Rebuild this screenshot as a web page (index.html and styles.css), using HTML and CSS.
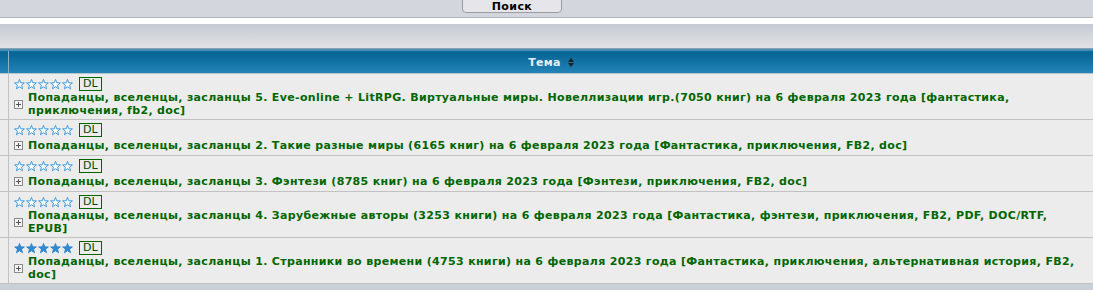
FILE: index.html
```html
<!DOCTYPE html>
<html lang="ru">
<head>
<meta charset="utf-8">
<title>Поиск</title>
<link rel="stylesheet" href="styles.css">
</head>
<body>
<svg class="defs" width="0" height="0" aria-hidden="true">
  <defs>
    <polygon id="star" points="5.5,0.4 6.75,3.8 10.4,3.9 7.55,6.15 8.55,9.8 5.5,7.7 2.45,9.8 3.45,6.15 0.6,3.9 4.25,3.8"/>
  </defs>
</svg>
<div class="topbar">
  <button class="search-btn" type="button">Поиск</button>
</div>
<div class="whiteband"></div>
<div class="grayband"></div>
<div class="table">
  <div class="head-row">
    <div class="side"></div>
    <div class="head-cell">Тема <span class="sort"><i class="up"></i><i class="down"></i></span></div>
  </div>

  <div class="row">
    <div class="side"></div>
    <div class="cell">
      <div class="meta">
        <span class="stars empty"><svg viewBox="0 0 11 11"><use href="#star"/></svg><svg viewBox="0 0 11 11"><use href="#star"/></svg><svg viewBox="0 0 11 11"><use href="#star"/></svg><svg viewBox="0 0 11 11"><use href="#star"/></svg><svg viewBox="0 0 11 11"><use href="#star"/></svg></span>
        <span class="dl">DL</span>
      </div>
      <div class="topic">
        <span class="plus"></span>
        <a class="title">Попаданцы, вселенцы, засланцы 5. Eve-online + LitRPG. Виртуальные миры. Новеллизации игр.(7050 книг) на 6 февраля 2023 года [фантастика, приключения, fb2, doc]</a>
      </div>
    </div>
  </div>

  <div class="row">
    <div class="side"></div>
    <div class="cell">
      <div class="meta">
        <span class="stars empty"><svg viewBox="0 0 11 11"><use href="#star"/></svg><svg viewBox="0 0 11 11"><use href="#star"/></svg><svg viewBox="0 0 11 11"><use href="#star"/></svg><svg viewBox="0 0 11 11"><use href="#star"/></svg><svg viewBox="0 0 11 11"><use href="#star"/></svg></span>
        <span class="dl">DL</span>
      </div>
      <div class="topic">
        <span class="plus"></span>
        <a class="title">Попаданцы, вселенцы, засланцы 2. Такие разные миры (6165 книг) на 6 февраля 2023 года [Фантастика, приключения, FB2, doc]</a>
      </div>
    </div>
  </div>

  <div class="row">
    <div class="side"></div>
    <div class="cell">
      <div class="meta">
        <span class="stars empty"><svg viewBox="0 0 11 11"><use href="#star"/></svg><svg viewBox="0 0 11 11"><use href="#star"/></svg><svg viewBox="0 0 11 11"><use href="#star"/></svg><svg viewBox="0 0 11 11"><use href="#star"/></svg><svg viewBox="0 0 11 11"><use href="#star"/></svg></span>
        <span class="dl">DL</span>
      </div>
      <div class="topic">
        <span class="plus"></span>
        <a class="title">Попаданцы, вселенцы, засланцы 3. Фэнтези (8785 книг) на 6 февраля 2023 года [Фэнтези, приключения, FB2, doc]</a>
      </div>
    </div>
  </div>

  <div class="row">
    <div class="side"></div>
    <div class="cell">
      <div class="meta">
        <span class="stars empty"><svg viewBox="0 0 11 11"><use href="#star"/></svg><svg viewBox="0 0 11 11"><use href="#star"/></svg><svg viewBox="0 0 11 11"><use href="#star"/></svg><svg viewBox="0 0 11 11"><use href="#star"/></svg><svg viewBox="0 0 11 11"><use href="#star"/></svg></span>
        <span class="dl">DL</span>
      </div>
      <div class="topic">
        <span class="plus"></span>
        <a class="title">Попаданцы, вселенцы, засланцы 4. Зарубежные авторы (3253 книги) на 6 февраля 2023 года [Фантастика, фэнтези, приключения, FB2, PDF, DOC/RTF, EPUB]</a>
      </div>
    </div>
  </div>

  <div class="row">
    <div class="side"></div>
    <div class="cell">
      <div class="meta">
        <span class="stars full"><svg viewBox="0 0 11 11"><use href="#star"/></svg><svg viewBox="0 0 11 11"><use href="#star"/></svg><svg viewBox="0 0 11 11"><use href="#star"/></svg><svg viewBox="0 0 11 11"><use href="#star"/></svg><svg viewBox="0 0 11 11"><use href="#star"/></svg></span>
        <span class="dl">DL</span>
      </div>
      <div class="topic">
        <span class="plus"></span>
        <a class="title">Попаданцы, вселенцы, засланцы 1. Странники во времени (4753 книги) на 6 февраля 2023 года [Фантастика, приключения, альтернативная история, FB2, doc]</a>
      </div>
    </div>
  </div>
</div>
</body>
</html>
```

FILE: styles.css
```css
html, body {
  margin: 0;
  padding: 0;
}
body {
  background: #cbd0d8;
  font-family: "DejaVu Sans", Verdana, sans-serif;
  font-size: 11px;
  letter-spacing: 0.33px;
  height: 290px;
  overflow: hidden;
}
.defs {
  position: absolute;
  width: 0;
  height: 0;
}
.topbar {
  height: 17px;
  background: #d3d6dd;
  border-bottom: 1px solid #b2b6ba;
  padding-left: 462px;
  overflow: hidden;
}
.search-btn {
  display: block;
  margin-top: -7px;
  width: 100px;
  height: 20px;
  padding: 6px 0 0;
  background: #e6e6ea;
  border: 1px solid #9c9ca0;
  border-radius: 4px;
  font-family: "DejaVu Sans", Verdana, sans-serif;
  font-size: 11px;
  letter-spacing: 0.4px;
  font-weight: bold;
  color: #000;
  line-height: 11px;
}
.whiteband {
  height: 6px;
  background: #ffffff;
}
.grayband {
  height: 24px;
  background: linear-gradient(#c6cbd3, #e0e2e4);
  border-bottom: 1px solid #8aa2ad;
}
.table {
  background: #ececec;
}
.head-row {
  display: flex;
  height: 25px;
  background: linear-gradient(#0a6899 0%, #0a6899 20%, #2384b8 100%);
  border-top: 2px solid #4a8fb5;
  border-bottom: 1px solid #b6c4cc;
  box-sizing: border-box;
}
.head-row .side {
  width: 8px;
  border-right: 1px solid #8fb0c4;
  flex: none;
}
.head-cell {
  flex: 1;
  display: flex;
  align-items: center;
  justify-content: center;
  color: #e6eef6;
  font-weight: bold;
  gap: 7px;
}
.sort {
  display: inline-flex;
  flex-direction: column;
  gap: 1px;
  margin-top: 1px;
}
.sort i {
  display: block;
  width: 0;
  height: 0;
  border-left: 3.5px solid transparent;
  border-right: 3.5px solid transparent;
}
.sort .up {
  border-bottom: 4px solid #222;
}
.sort .down {
  border-top: 4px solid #222;
}
.row {
  display: flex;
  border-bottom: 1px solid #c2c2c2;
}
.row .side {
  width: 8px;
  flex: none;
  border-right: 1px solid #c2c2c2;
}
.cell {
  flex: 1;
  padding: 3px 5px 2px 5px;
}
.meta {
  display: flex;
  align-items: center;
  height: 14px;
  gap: 5px;
}
.stars {
  display: flex;
  gap: 1px;
}
.stars svg {
  width: 11px;
  height: 11px;
  display: block;
}
.stars.empty svg {
  fill: #ffffff;
  stroke: #3e9be0;
  stroke-width: 1;
}
.stars.full svg {
  fill: #2f8ad4;
  stroke: #2a7fc6;
  stroke-width: 0.8;
}
.dl {
  display: block;
  border: 1px solid #006600;
  color: #004d00;
  font-size: 11px;
  letter-spacing: 0;
  line-height: 12px;
  padding: 0 3px;
  height: 12px;
  margin-left: 1px;
}
.topic {
  display: flex;
  align-items: center;
  gap: 5px;
  min-height: 16px;
}
.plus {
  flex: none;
  position: relative;
  width: 7px;
  height: 7px;
  border: 1px solid #8a8a8a;
  background: #f4f4f4;
}
.plus::before,
.plus::after {
  content: "";
  position: absolute;
  background: #555;
}
.plus::before {
  left: 1px;
  top: 3px;
  width: 5px;
  height: 1px;
}
.plus::after {
  left: 3px;
  top: 1px;
  width: 1px;
  height: 5px;
}
.title {
  color: #006600;
  font-weight: bold;
  line-height: 13px;
  text-decoration: none;
}
```
